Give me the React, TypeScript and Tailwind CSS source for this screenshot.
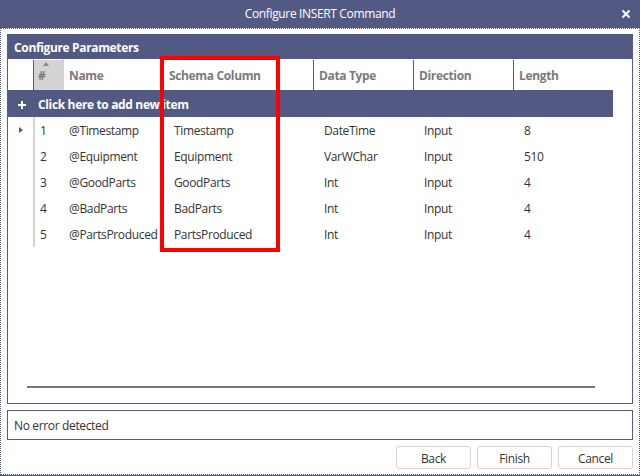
const rows = [
  ["1", "@Timestamp", "Timestamp", "DateTime", "Input", "8"],
  ["2", "@Equipment", "Equipment", "VarWChar", "Input", "510"],
  ["3", "@GoodParts", "GoodParts", "Int", "Input", "4"],
  ["4", "@BadParts", "BadParts", "Int", "Input", "4"],
  ["5", "@PartsProduced", "PartsProduced", "Int", "Input", "4"],
];

const grid = "grid grid-cols-[25px_30px_100px_150px_100px_100px_100px]";

export default function App() {
  return (
    <div className="relative w-[640px] h-[476px] flex flex-col bg-[#525a84] text-[12px] tracking-[-0.35px] text-[#333333] overflow-hidden [font-family:'Open_Sans','Liberation_Sans',sans-serif]">
      <div className="relative h-[28px] shrink-0 flex items-center justify-center text-white text-[12px]">
        Configure INSERT Command
        <svg className="absolute left-[621px] top-[9px]" width="10" height="10" viewBox="0 0 10 10">
          <path d="M1.5 1.5L8.5 8.5M8.5 1.5L1.5 8.5" stroke="#ffffff" strokeWidth="2" fill="none" />
        </svg>
      </div>
      <div className="flex-1 flex flex-col bg-white border border-dotted border-[#525a84] mb-[1px] px-[6px] pt-[5px] pb-[5px] gap-[6px]">
        <div className="flex-1 flex flex-col border border-[#525a84] border-t-0 border-b-[1px] h-[370px] min-h-0">
          <div className="h-[25px] shrink-0 bg-[#525a84] text-white font-bold flex items-center px-[6px] pt-[2px]">
            Configure Parameters
          </div>
          <div className={`${grid} h-[31px] shrink-0 font-bold text-[#7a7a7a]`}>
            <div />
            <div className="relative bg-[#d4d2d4] border-l border-[#525a84] flex items-center pl-[4px] mt-[1px] pt-[2px]">
              <span>#</span>
              <span className="absolute left-[9px] top-[2px] w-0 h-0 border-x-[3px] border-x-transparent border-b-[4px] border-b-[#8a8a8a]" />
            </div>
            <div className="border-l border-[#d4d2d4] flex items-center pl-[5px] pt-[2px]">Name</div>
            <div className="border-l border-[#525a84] flex items-center pl-[5px] mt-[1px] pt-[2px]">Schema Column</div>
            <div className="border-l border-[#525a84] flex items-center pl-[5px] mt-[1px] pt-[2px]">Data Type</div>
            <div className="border-l border-[#525a84] flex items-center pl-[5px] mt-[1px] pt-[2px]">Direction</div>
            <div className="border-l border-[#525a84] flex items-center pl-[5px] mt-[1px] pt-[2px]">Length</div>
          </div>
          <div className="h-[27px] w-[605px] shrink-0 bg-[#525a84] text-white font-bold flex items-center pt-[2px]">
            <svg className="ml-[9px] mr-[11px]" width="10" height="10" viewBox="0 0 10 10">
              <path d="M5 1V9M1 5H9" stroke="#ffffff" strokeWidth="2" fill="none" />
            </svg>
            Click here to add new item
          </div>
          {rows.map((r, i) => (
            <div key={r[0]} className={`${grid} h-[26px] shrink-0 items-stretch`}>
              <div className="flex items-center pl-[11px]">
                {i === 0 && (
                  <span className="w-0 h-0 border-y-[3px] border-y-transparent border-l-[4px] border-l-[#525a84]" />
                )}
              </div>
              <div className="border-l-2 border-[#d4d2d4] flex items-center pl-[5px] pt-[2px]">{r[0]}</div>
              <div className="flex items-center pl-[6px] pt-[2px] whitespace-nowrap">{r[1]}</div>
              <div className="flex items-center pl-[11px] pt-[2px]">{r[2]}</div>
              <div className="flex items-center pl-[11px] pt-[2px]">{r[3]}</div>
              <div className="flex items-center pl-[11px] pt-[2px]">{r[4]}</div>
              <div className="flex items-center pl-[11px] pt-[2px]">{r[5]}</div>
            </div>
          ))}
          <div className="flex-1" />
          <div className="h-[2px] shrink-0 bg-[#777777] ml-[19px] mr-[37px] mb-[15px]" />
        </div>
        <div className="h-[30px] shrink-0 border border-[#525a84] flex items-center px-[6px] pt-[2px]">No error detected</div>
        <div className="h-[23px] shrink-0 flex justify-end gap-[6px]">
          <button className="w-[75px] border border-[#d4d4d4] rounded-[3px] bg-white pt-[2px]">Back</button>
          <button className="w-[75px] border border-[#d4d4d4] rounded-[3px] bg-white pt-[2px]">Finish</button>
          <button className="w-[75px] border border-[#d4d4d4] rounded-[3px] bg-white pt-[2px]">Cancel</button>
        </div>
      </div>
      <div className="absolute left-[160px] top-[56px] w-[120px] h-[196px] border-[4px] border-[#ff0000]" />
    </div>
  );
}
